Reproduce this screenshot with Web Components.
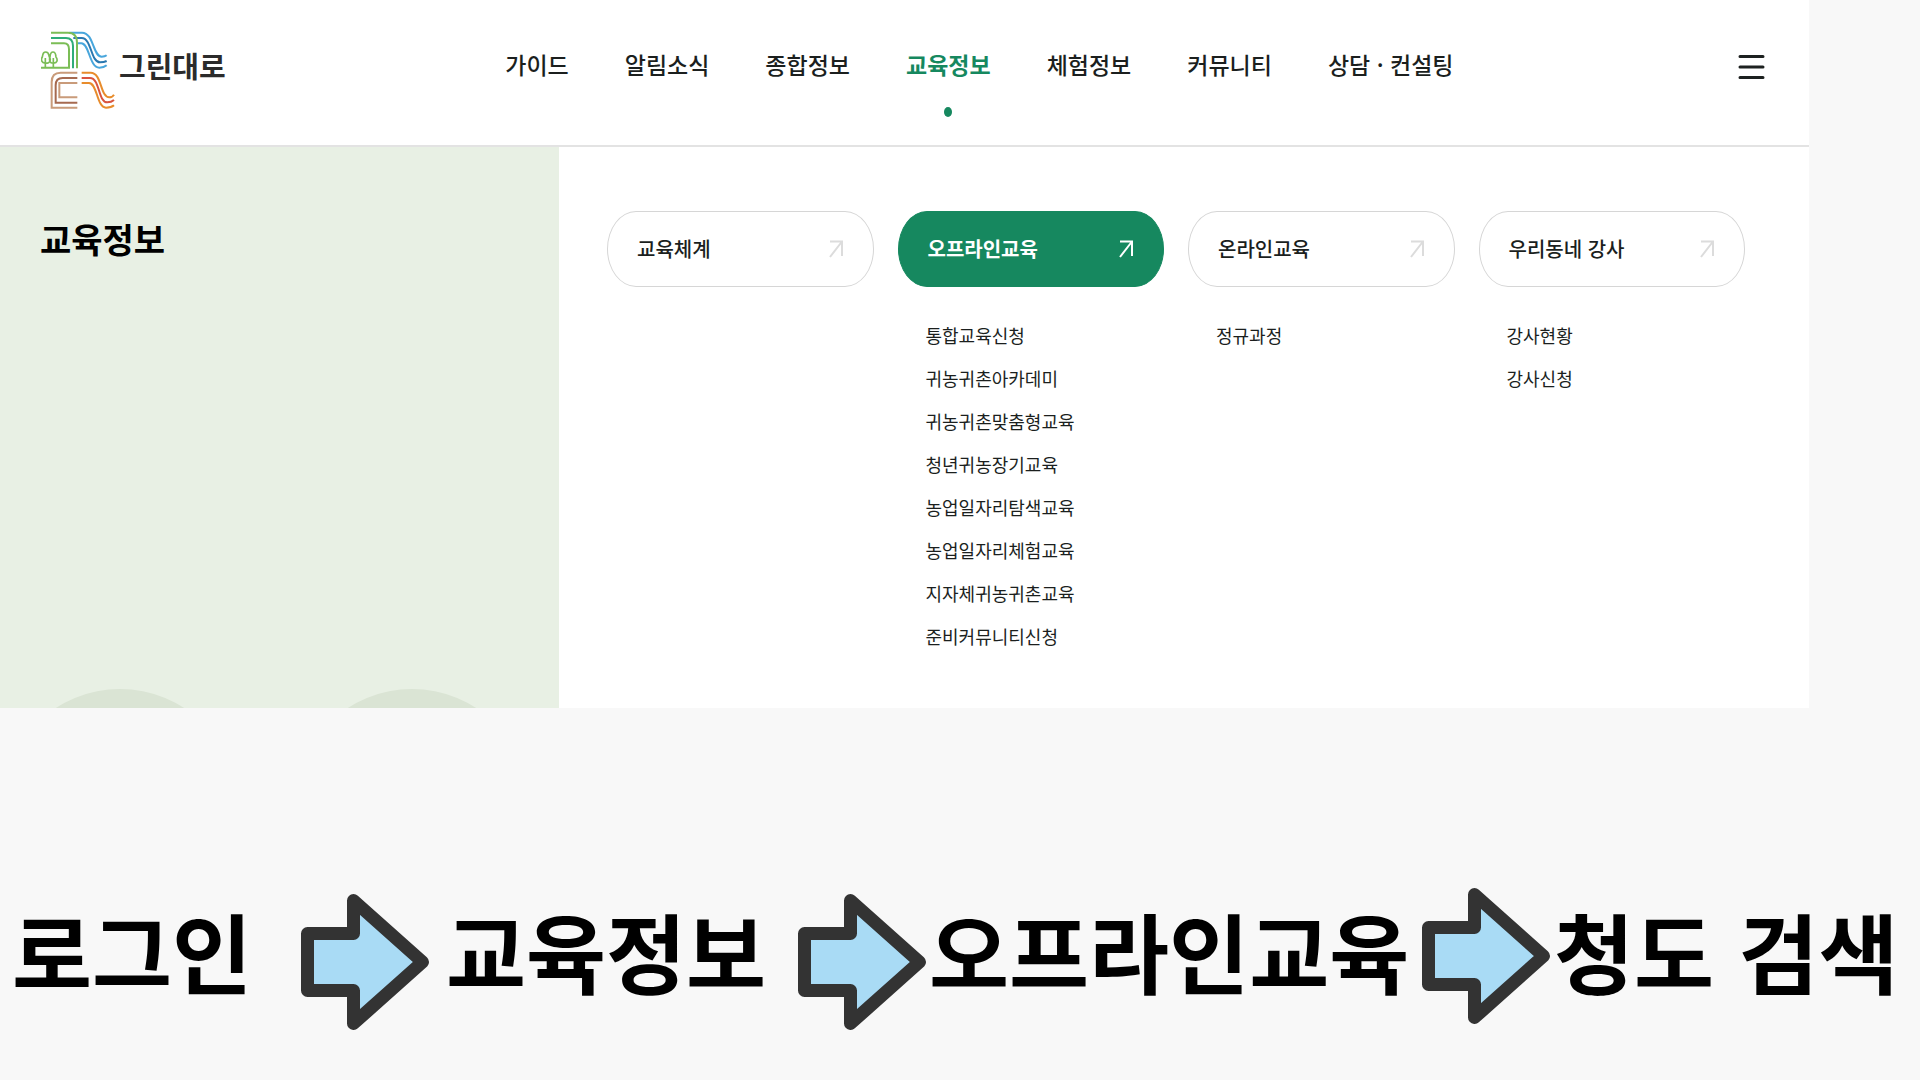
<!DOCTYPE html>
<html lang="ko">
<head>
<meta charset="utf-8">
<meta name="viewport" content="width=device-width, initial-scale=1">
<title>그린대로 교육정보</title>
<style>
  html, body { margin: 0; }
  body { min-height: 100vh; background: #f8f8f8; color: #1b1f1e; font-family: "Noto Sans CJK KR", "Noto Sans", sans-serif; }
</style>
</head>
<body>
<guide-page>
  <site-header slot="header">
    <nav-item>가이드</nav-item>
    <nav-item>알림소식</nav-item>
    <nav-item>종합정보</nav-item>
    <nav-item active>교육정보</nav-item>
    <nav-item>체험정보</nav-item>
    <nav-item>커뮤니티</nav-item>
    <nav-item>상담 · 컨설팅</nav-item>
  </site-header>
  <mega-menu slot="menu" heading="교육정보">
    <menu-column heading="교육체계"></menu-column>
    <menu-column heading="오프라인교육" active items="통합교육신청,귀농귀촌아카데미,귀농귀촌맞춤형교육,청년귀농장기교육,농업일자리탐색교육,농업일자리체험교육,지자체귀농귀촌교육,준비커뮤니티신청"></menu-column>
    <menu-column heading="온라인교육" items="정규과정"></menu-column>
    <menu-column heading="우리동네 강사" items="강사현황,강사신청"></menu-column>
  </mega-menu>
  <step-flow slot="steps">
    <flow-step>로그인</flow-step>
    <flow-arrow></flow-arrow>
    <flow-step>교육정보</flow-step>
    <flow-arrow></flow-arrow>
    <flow-step>오프라인교육</flow-step>
    <flow-arrow raised></flow-arrow>
    <flow-step>청도 검색</flow-step>
  </step-flow>
</guide-page>

<script>
class BaseElement extends HTMLElement {
  connectedCallback() {
    if (this.shadowRoot) return;
    this.attachShadow({ mode: 'open' }).innerHTML = this.view();
  }
}

customElements.define('guide-page', class extends BaseElement {
  view() {
    return `<style>
      :host { display: block; overflow: hidden; }
      .screen { margin-right: 111px; background: #fff; }
      .steps { padding: 180px 24px 48px 12px; }
    </style>
    <div class="screen"><slot name="header"></slot><slot name="menu"></slot></div>
    <main class="steps"><slot name="steps"></slot></main>`;
  }
});

customElements.define('site-logo', class extends BaseElement {
  view() {
    return `<style>
      :host { display: block; }
      a { display: flex; align-items: center; gap: 4px; color: #2b2b2b; text-decoration: none; font-size: 29px; line-height: 40px; font-weight: 700; }
      svg { display: block; flex: none; }
      span { padding-bottom: 10px; }
    </style>
    <a href="#">
      <svg width="74" height="78" viewBox="63 63 222 234" fill="none" stroke-width="6" aria-hidden="true">
        <g stroke="#48a6dc">
          <path d="M148 68H186C222 68 218 140 245 140Q255 140 260 136"/>
          <path d="M168 100H184C208 100 208 173 238 173Q252 173 260 166"/>
        </g>
        <path stroke="#2a78b0" d="M160 84H185C215 84 212 157 240 157Q252 157 260 153"/>
        <g stroke="#7bbd56">
          <path d="M93 68H144Q171 68 171 98V175"/>
          <path d="M93 100H132Q147 100 147 118V173H63"/>
          <path stroke-width="5" d="M76 172V144M100 172V144M77 126C66 126 69 137 67 141C61 150 67 162 77 158C87 163 95 150 88 141C86 136 88 126 77 126ZM99 126C90 126 91 136 90 141C86 152 92 162 100 158C110 162 115 150 108 141C107 136 108 126 99 126Z"/>
        </g>
        <path stroke="#2fad78" d="M93 84H138Q159 84 159 108V175"/>
        <g stroke="#c99b7a">
          <path d="M172 188H122Q95 188 95 216V293H172"/>
          <path d="M172 219H118V262H172"/>
        </g>
        <path stroke="#a66a50" d="M172 204H128Q107 204 107 226V278H172"/>
        <g stroke="#e88c2c">
          <path d="M185 188H212C246 188 240 262 268 262Q277 262 282 254"/>
          <path d="M185 219H207C232 219 230 293 258 293Q274 293 282 286"/>
        </g>
        <path stroke="#d9543f" d="M185 204H210C240 204 234 277 262 277Q274 277 282 270"/>
      </svg>
      <span>그린대로</span>
    </a>`;
  }
});

customElements.define('site-header', class extends BaseElement {
  view() {
    return `<style>
      :host { display: block; border-bottom: 2px solid #e3e3e3; }
      header { display: flex; align-items: center; justify-content: space-between; height: 145px; padding: 0 44px 0 41px; box-sizing: border-box; }
      site-logo { padding-bottom: 5px; }
      nav { display: flex; gap: 56px; padding-bottom: 18px; }
      button { display: flex; justify-content: flex-end; width: 32px; padding: 0 0 11px; border: 0; background: none; color: #1d2120; cursor: pointer; }
    </style>
    <header>
      <site-logo></site-logo>
      <nav aria-label="주요 메뉴"><slot></slot></nav>
      <button type="button" aria-label="전체 메뉴">
        <svg width="27" height="26" viewBox="0 0 27 26" fill="none" stroke="currentColor" stroke-width="3" stroke-linecap="round" aria-hidden="true"><path d="M2 2.5H25M2 13H25M2 23.5H25"/></svg>
      </button>
    </header>`;
  }
});

customElements.define('nav-item', class extends BaseElement {
  view() {
    return `<style>
      :host { display: block; position: relative; font-size: 23px; line-height: 34px; font-weight: 500; white-space: nowrap; }
      a { color: inherit; text-decoration: none; }
      :host([active]) { color: #16885f; font-weight: 700; }
      :host([active])::after { content: ""; position: absolute; top: 60px; left: 50%; width: 8px; height: 10px; margin-left: -4px; border-radius: 50%; background: #16885f; }
    </style><a href="#"><slot></slot></a>`;
  }
});

customElements.define('mega-menu', class extends BaseElement {
  view() {
    return `<style>
      :host { display: grid; grid-template-columns: 559fr 1250fr; min-height: 561px; }
      aside { position: relative; overflow: hidden; padding: 64px 40px; background: #e8f0e4; }
      h2 { margin: 0; color: #000; font-size: 34px; line-height: 56px; font-weight: 700; }
      svg { position: absolute; left: 0; bottom: 0; }
      .columns { display: grid; grid-template-columns: repeat(4, 1fr); gap: 24px; align-items: start; padding: 64px 64px 48px 48px; }
    </style>
    <aside>
      <h2>${this.getAttribute('heading')}</h2>
      <svg width="559" height="20" fill="#dae4d4" aria-hidden="true"><circle cx="120" cy="119" r="118"/><circle cx="412" cy="119" r="118"/></svg>
    </aside>
    <div class="columns"><slot></slot></div>`;
  }
});

customElements.define('menu-column', class extends BaseElement {
  view() {
    const items = (this.getAttribute('items') || '').split(',').filter(Boolean);
    return `<style>
      :host { display: block; }
      a { color: inherit; text-decoration: none; }
      .pill { display: flex; align-items: center; justify-content: space-between; height: 76px; box-sizing: border-box; padding: 0 30px 0 29px; border: 1px solid #d6d6d6; border-radius: 29px / 38px; font-size: 20px; font-weight: 500; }
      .pill span { padding-bottom: 2px; }
      .pill svg { color: #dcdcdc; }
      :host([active]) .pill { border-color: #16885f; background: #16885f; color: #fff; font-weight: 700; }
      :host([active]) .pill svg { color: #fff; }
      ul { margin: 0; padding: 27px 0 0 28px; list-style: none; font-size: 18px; line-height: 43px; white-space: nowrap; }
    </style>
    <a class="pill" href="#"><span>${this.getAttribute('heading')}</span>
      <svg width="14" height="18" viewBox="0 0 14 18" fill="none" stroke="currentColor" stroke-width="2" aria-hidden="true"><path d="M1 1.5H13V16M13 1.5L1 17"/></svg>
    </a>
    ${items.length ? `<ul>${items.map(t => `<li><a href="#">${t}</a></li>`).join('')}</ul>` : ''}`;
  }
});

customElements.define('step-flow', class extends BaseElement {
  view() {
    return `<style>
      :host { display: grid; grid-template-columns: 289fr 145fr 352fr 131fr 493fr 132fr 342fr; align-items: start; }
      ::slotted(*) { min-width: 0; }
    </style><slot></slot>`;
  }
});

customElements.define('flow-step', class extends BaseElement {
  view() {
    return `<style>
      :host { display: block; color: #000; font-size: 87px; line-height: 124px; font-weight: 700; white-space: nowrap; }
    </style><slot></slot>`;
  }
});

customElements.define('flow-arrow', class extends BaseElement {
  view() {
    return `<style>
      :host { display: block; padding-top: 6px; }
      :host([raised]) { padding-top: 0; }
      svg { display: block; }
    </style>
    <svg width="128" height="136" viewBox="0 0 128 136" fill="#a9dbf5" stroke="#333" stroke-width="13" stroke-linejoin="round" aria-hidden="true"><path d="M6.500 39.500H52.500V6.500L121.500 68L52.500 129.500V96.500H6.500Z"/></svg>`;
  }
});
</script>
</body>
</html>
